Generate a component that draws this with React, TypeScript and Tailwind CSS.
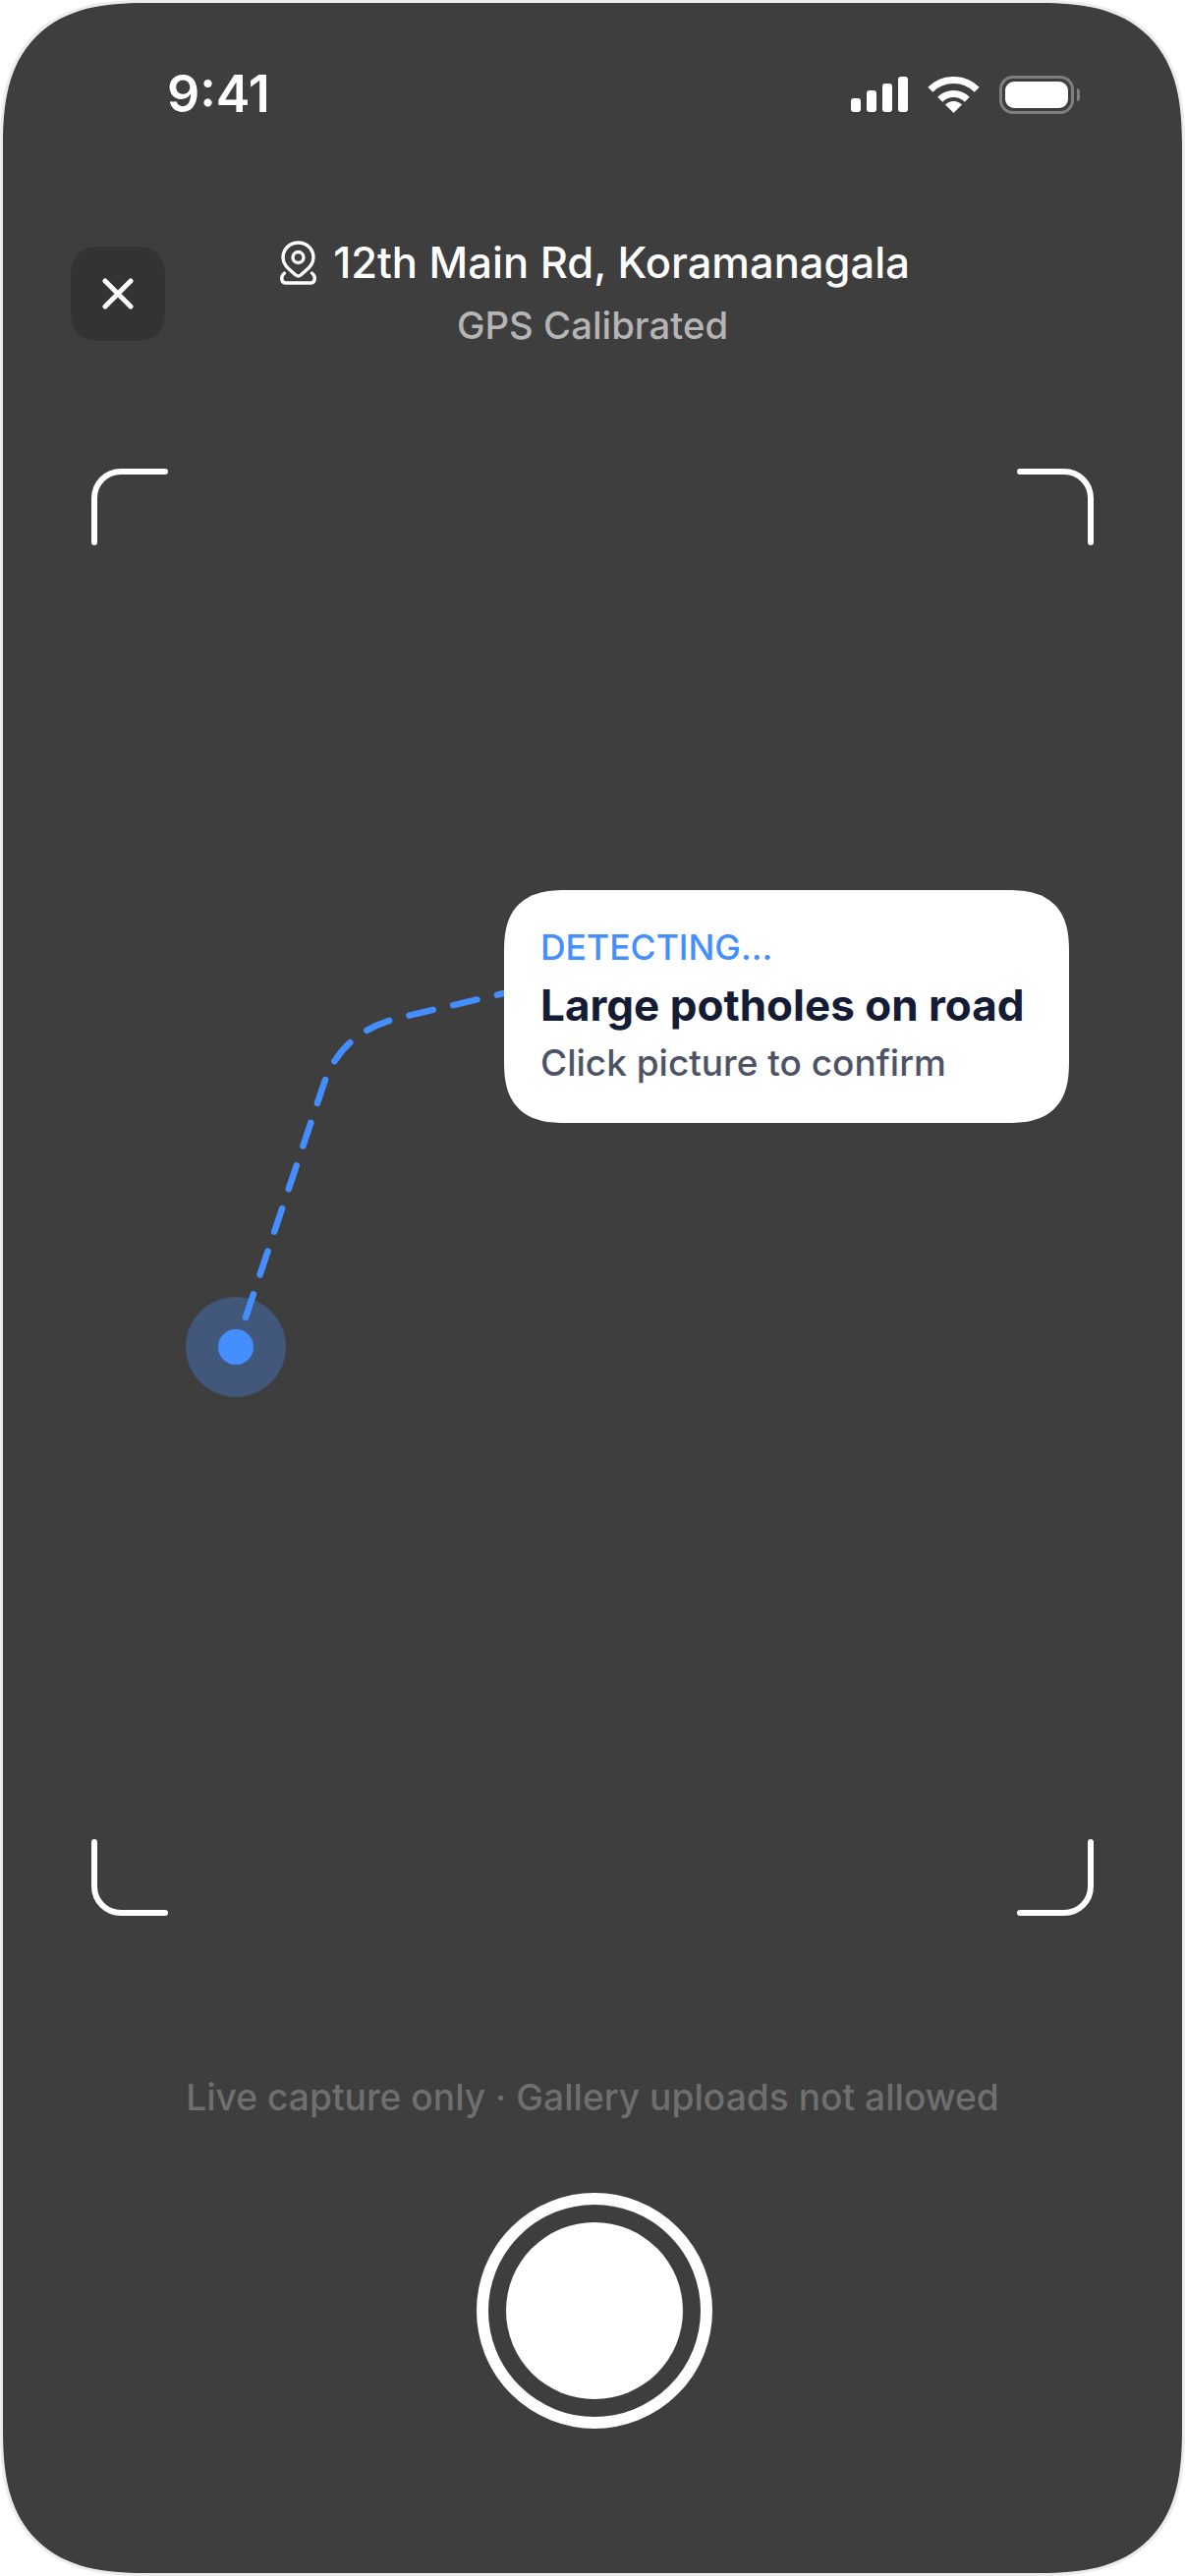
const FONT = "font-['Inter','Liberation_Sans',sans-serif]";

function Signal() {
  return (
    <div className="flex items-end gap-[6px]">
      <div className="h-[14px] w-[10px] rounded-[3px] bg-white" />
      <div className="h-[22px] w-[10px] rounded-[3px] bg-white" />
      <div className="h-[29px] w-[10px] rounded-[3px] bg-white" />
      <div className="h-[36px] w-[10px] rounded-[3px] bg-white" />
    </div>
  );
}

function Wifi() {
  return (
    <svg width="53" height="37" viewBox="0 0 53 37" fill="none" className="shrink-0">
      <path d="M2.8 13.3A33.5 33.5 0 0 1 50.2 13.3" stroke="white" strokeWidth="7" />
      <path d="M12.7 23.2A19.5 19.5 0 0 1 40.3 23.2" stroke="white" strokeWidth="7" />
      <path d="M26.5 37L18 28.5A12 12 0 0 1 35 28.5Z" fill="white" />
    </svg>
  );
}

function Battery() {
  return (
    <div className="flex items-center gap-[3px]">
      <div className="h-[39px] w-[76px] rounded-[14px] border-[3px] border-[#7f7f7f] p-[3px]">
        <div className="h-full w-full rounded-[9px] bg-white" />
      </div>
      <div className="h-[13px] w-[3px] rounded-r-[3px] bg-[#7f7f7f]" />
    </div>
  );
}

function PinIcon() {
  return (
    <svg width="37" height="45" viewBox="0 0 37 45" fill="none" stroke="white" strokeWidth="3.4" strokeLinecap="round" strokeLinejoin="round" className="shrink-0">
      <path d="M18.5 2C9.5 2 3 9 3 17C3 24 8 28 12 31.5L16 35Q18.5 37 21 35L25 31.5C29 28 34 24 34 17C34 9 27.5 2 18.5 2Z" />
      <circle cx="18.5" cy="17" r="5.5" />
      <path d="M4.5 33C2 35 1.5 38 2 40C2.5 42 4 43 6 43H31C33 43 34.5 42 35 40C35.5 38 35 35 32.5 33" />
    </svg>
  );
}

function CloseIcon() {
  return (
    <svg width="32" height="32" viewBox="0 0 32 32" fill="none" stroke="white" strokeWidth="5" strokeLinecap="round">
      <path d="M3 3L29 29M29 3L3 29" />
    </svg>
  );
}

// top left bracket, the other three are rotations of it
function Bracket({ className }: { className: string }) {
  return (
    <svg width="78" height="78" viewBox="0 0 78 78" fill="none" stroke="white" strokeWidth="6" strokeLinecap="round" className={`absolute ${className}`}>
      <path d="M3 75V30C3 15 15 3 30 3H75" />
    </svg>
  );
}

function Callout() {
  return (
    <div className={`absolute left-[420px] top-[429px] h-[237px] w-[575px] rounded-[64px] bg-white pl-[37px] pt-[34px] [corner-shape:superellipse(1.4)] ${FONT}`}>
      <div className="text-[35.5px] font-medium leading-[50px] text-[#448eff]">DETECTING...</div>
      <div className="mt-[8px] text-[44px] font-bold leading-[50px] text-[#141b34]">Large potholes on road</div>
      <div className="mt-[9px] text-[37px] font-medium leading-[50px] text-[#4d5366]">Click picture to confirm</div>
    </div>
  );
}

function Pointer() {
  return (
    <>
      <div className="absolute left-[96px] top-[843px] flex h-[102px] w-[102px] items-center justify-center rounded-full bg-[#41587a]">
        <div className="h-[36px] w-[36px] rounded-full bg-[#448eff]" />
      </div>
      <svg viewBox="93 477 1020 1473" fill="none" className="absolute inset-0 h-full w-full">
        <path
          d="M250 1341L330 1102C345 1060 375 1045 402 1037L513 1011"
          stroke="#448eff"
          strokeWidth="6.5"
          strokeLinecap="round"
          strokeDasharray="25 21"
        />
      </svg>
    </>
  );
}

export default function App() {
  return (
    <div className="h-[2622px] w-[1206px] bg-white">
      <div className={`flex h-full flex-col items-center overflow-hidden rounded-[150px] border-[3px] border-[#ececec] bg-[#3e3e3e] [corner-shape:superellipse(1.4)] ${FONT}`}>
        <div className="mt-[68px] flex h-[50px] w-full items-center justify-between pl-[167px] pr-[104px]">
          <span className="text-[52px] font-semibold leading-[50px] text-white">9:41</span>
          <div className="flex items-center gap-[20px]">
            <Signal />
            <Wifi />
            <Battery />
          </div>
        </div>

        <div className="mt-[122px] grid w-full grid-cols-[96px_1fr_96px] items-center px-[69px]">
          <div className="flex h-[96px] w-[96px] items-center justify-center rounded-[32px] bg-[#333333] [corner-shape:superellipse(1.4)]">
            <CloseIcon />
          </div>
          <div className="flex flex-col items-center">
            <div className="ml-[5px] flex items-center gap-[17px]">
              <PinIcon />
              <span className="text-[43.5px] font-medium leading-[48px] text-white">12th Main Rd, Koramanagala</span>
            </div>
            <span className="mt-[17px] text-[38.3px] font-medium leading-[46px] text-[#b5b5b5]">GPS Calibrated</span>
          </div>
          <div />
        </div>

        <div className="relative mt-[123px] h-[1473px] w-[1020px] shrink-0">
          <Bracket className="left-0 top-0" />
          <Bracket className="right-0 top-0 rotate-90" />
          <Bracket className="bottom-0 right-0 rotate-180" />
          <Bracket className="bottom-0 left-0 -rotate-90" />
          <Pointer />
          <Callout />
        </div>

        <p className="mt-[163px] text-[37.2px] font-medium leading-[44px] text-[#6f6f6f]">Live capture only · Gallery uploads not allowed</p>

        <div className="ml-[3px] mt-[75px] flex h-[240px] w-[240px] items-center justify-center rounded-full border-[12px] border-white">
          <div className="h-[180px] w-[180px] rounded-full bg-white" />
        </div>
      </div>
    </div>
  );
}
